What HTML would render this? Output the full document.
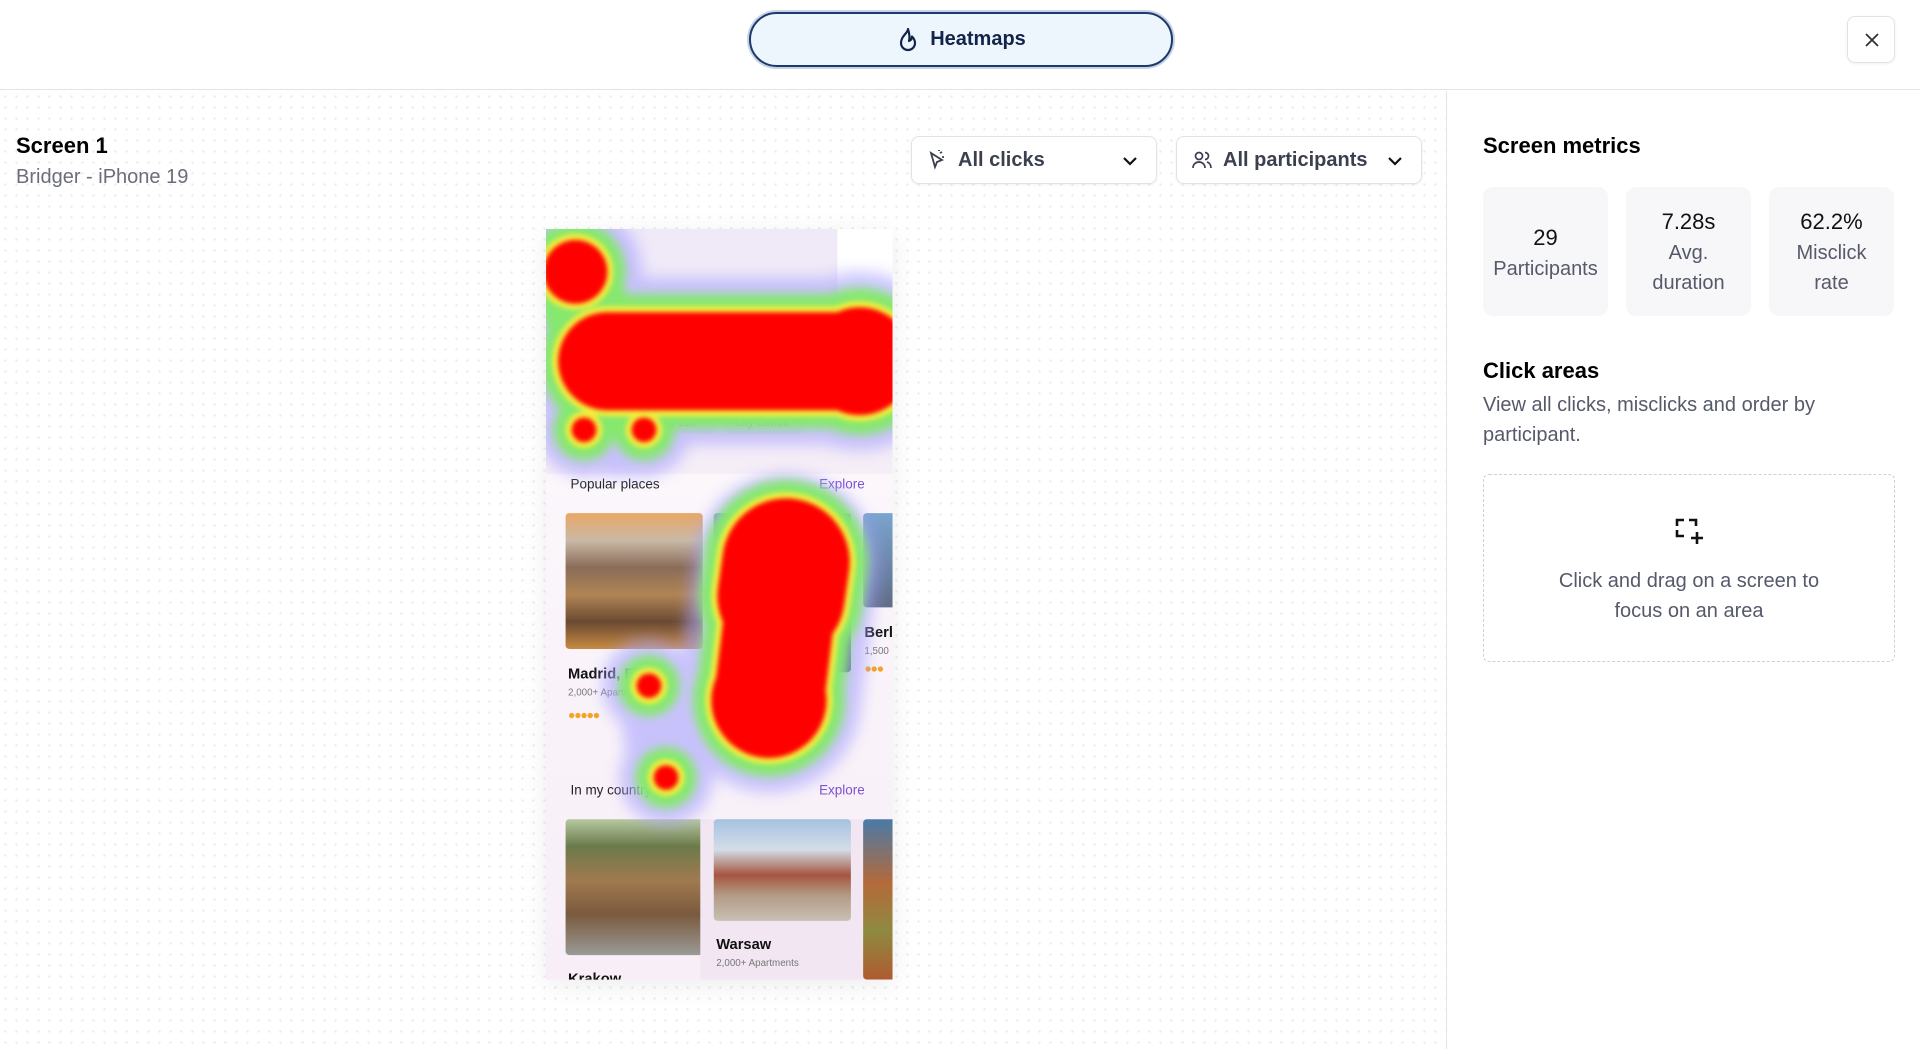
<!DOCTYPE html>
<html><head><meta charset="utf-8"><style>
*{box-sizing:border-box;margin:0;padding:0}
body{width:1920px;height:1049px;overflow:hidden;background:#fff;font-family:"Liberation Sans",sans-serif;position:relative;color:#111}
.hdr{position:absolute;left:0;top:0;width:1920px;height:90px;border-bottom:1px solid #e4e4e7;background:#fff}
.hm{position:absolute;left:749px;top:12px;width:424px;height:55px;border-radius:28px;background:#eef6fd;border:2px solid #1d3a6e;box-shadow:0 0 0 2px #c9d3e4;display:flex;align-items:center;justify-content:center;font-weight:bold;font-size:20px;color:#13244a;gap:10px}
.cls{position:absolute;left:1847px;top:16px;width:48px;height:47px;border:1px solid #e2e2e6;border-radius:8px;box-shadow:0 1px 3px rgba(0,0,0,.06)}
.main{position:absolute;left:0;top:91px;width:1446px;height:958px;background-color:#fff;background-image:radial-gradient(circle,#ececef 1.1px,transparent 1.4px);background-size:11px 11px}
.vline{position:absolute;left:1446px;top:91px;width:1px;height:958px;background:#e4e4e7}
.dd{position:absolute;top:136px;height:48px;border:1px solid #e2e2e6;border-radius:8px;background:#fff;box-shadow:0 1px 3px rgba(0,0,0,.05);font-weight:bold;font-size:20px;color:#3b3f4e;display:flex;align-items:center;padding-left:14px}
.dd .chev{position:absolute;right:16px;top:14px}
.card{position:absolute;top:187px;width:125px;height:129px;background:#f7f7f9;border-radius:10px;text-align:center;font-size:20px;color:#55596a;line-height:30px}
.card b{font-weight:normal;color:#111;font-size:22px}
.phone{position:absolute;left:546px;top:229px;width:283px;height:613px;transform:scale(1.2245);transform-origin:0 0;overflow:hidden;background:#fbf6fb;box-shadow:0 4px 20px rgba(0,0,0,.08);font-family:"Liberation Sans",sans-serif}
.ph{position:absolute}
</style></head><body>
<div class="hdr">
 <div class="hm"><svg width="24" height="26" viewBox="0 0 24 26" fill="none" stroke="#13244a" stroke-width="2.2" stroke-linejoin="round"><path d="M12 2c0 4-7 7-7 14a7 7 0 0 0 14 0c0-3-1.5-5-3-6.5 0 2.5-1.5 4-3 4.5 1-3 .5-7-1-12z"/></svg>Heatmaps</div>
 <div class="cls"><svg width="48" height="47" viewBox="0 0 48 47"><path d="M18 17l12 12M30 17L18 29" stroke="#333" stroke-width="1.8"/></svg></div>
</div>
<div class="main"></div>
<div class="vline"></div>
<div style="position:absolute;left:16px;top:133px;font-size:22px;font-weight:bold;color:#000">Screen 1</div>
<div style="position:absolute;left:16px;top:166px;font-size:20px;color:#6b6e7a">Bridger - iPhone 19</div>

<div class="dd" style="left:911px;width:246px"><svg width="22" height="22" viewBox="0 0 22 22" fill="none" stroke="#3b3f4e" stroke-width="1.8"><path d="M5 4l4 14 2-5 5-2z"/><path d="M14 4l2-1M16 8h2M13 2v-1"/></svg><span style="margin-left:10px">All clicks</span><svg class="chev" width="20" height="20" viewBox="0 0 20 20"><path d="M4 7l6 6 6-6" stroke="#111" stroke-width="2.2" fill="none"/></svg></div>
<div class="dd" style="left:1176px;width:246px"><svg width="22" height="22" viewBox="0 0 22 22" fill="none" stroke="#3b3f4e" stroke-width="1.7"><circle cx="8" cy="7" r="3.5"/><path d="M2 19c0-4 3-6 6-6s6 2 6 6"/><path d="M14 3.5a3.5 3.5 0 0 1 0 7M16 13c2 .5 4 2.5 4 6"/></svg><span style="margin-left:10px">All participants</span><svg class="chev" width="20" height="20" viewBox="0 0 20 20"><path d="M4 7l6 6 6-6" stroke="#111" stroke-width="2.2" fill="none"/></svg></div>

<div class="phone">
 <div class="ph" style="left:0;top:0;width:283px;height:215px;background:linear-gradient(180deg,#efe9f8,#f6eef6)"></div>
 <div class="ph" style="left:238px;top:0;width:45px;height:62px;background:#fff"></div>
 <div class="ph" style="left:44px;top:150px;width:96px;height:17px;background:#ebe3f3;border-radius:4px;font-size:9px;color:#7b5ad0;padding:3px 0 0 46px">to £ 100</div>
 <div class="ph" style="left:147px;top:150px;width:64px;height:17px;background:#ebe3f3;border-radius:4px;font-size:9px;color:#7b5ad0;padding:3px 0 0 7px">City Centre</div>
 <div class="ph" style="left:0;top:200px;width:283px;height:413px;background:linear-gradient(180deg,#fbf7fb,#f7eef7)"></div>
 <div class="ph" style="left:20px;top:203px;font-size:11px;color:#222">Popular places</div>
 <div class="ph" style="left:223px;top:203px;font-size:11px;color:#7c4fd6">Explore</div>
 <div class="ph" style="left:16px;top:232px;width:112px;height:111px;border-radius:3px;background:linear-gradient(180deg,#e9a765 0%,#c9b9a6 20%,#8a6c58 40%,#b08454 60%,#6b4a33 80%,#c78a41 100%)"></div>
 <div class="ph" style="left:137px;top:232px;width:112px;height:130px;border-radius:3px;background:linear-gradient(160deg,#7aa0c0,#3e6a3a 60%,#203050)"></div>
 <div class="ph" style="left:259px;top:232px;width:30px;height:77px;border-radius:3px;background:linear-gradient(180deg,#7aa5cf,#5f6c86)"></div>
 <div class="ph" style="left:260px;top:322px;font-size:12px;font-weight:bold">Berl</div>
 <div class="ph" style="left:260px;top:340px;font-size:8px;color:#777">1,500</div>
 <div class="ph" style="left:18px;top:356px;font-size:12px;font-weight:bold">Madrid, ES</div>
 <div class="ph" style="left:18px;top:374px;font-size:8px;color:#777">2,000+ Apartments</div>
 <div class="ph" style="left:18px;top:392px;font-size:10px;color:#f3a424;letter-spacing:-1px">●●●●●</div>
 <div class="ph" style="left:260px;top:354px;font-size:10px;color:#f3a424;letter-spacing:-1px">●●●</div>
 <div class="ph" style="left:20px;top:453px;font-size:11px;color:#222">In my country</div>
 <div class="ph" style="left:223px;top:453px;font-size:11px;color:#7c4fd6">Explore</div>
 <div class="ph" style="left:16px;top:482px;width:112px;height:111px;border-radius:3px;background:linear-gradient(180deg,#b5c8a0 0%,#6b7a4a 20%,#a07a50 45%,#7a5a3e 70%,#9a9a96 100%)"></div>
 <div class="ph" style="left:126px;top:482px;width:134px;height:131px;background:#f2e6f2"></div>
 <div class="ph" style="left:137px;top:482px;width:112px;height:83px;border-radius:3px;background:linear-gradient(180deg,#a6c2e0 0%,#d3dde7 30%,#a5553f 55%,#b39b85 75%,#c8c0b5 100%)"></div>
 <div class="ph" style="left:259px;top:482px;width:30px;height:131px;border-radius:3px;background:linear-gradient(180deg,#4a7aa8,#b46a3a 40%,#8e8a40 70%,#b05a30)"></div>
 <div class="ph" style="left:139px;top:577px;font-size:12px;font-weight:bold">Warsaw</div>
 <div class="ph" style="left:139px;top:595px;font-size:8px;color:#777">2,000+ Apartments</div>
 <div class="ph" style="left:18px;top:605px;font-size:12px;font-weight:bold">Krakow</div>
 <svg class="ph" style="left:0;top:0" width="283" height="613" viewBox="0 0 283 613" fill="none" stroke-linecap="round" stroke-linejoin="round">
  <defs>
   <filter id="b5" x="-50%" y="-50%" width="200%" height="200%"><feGaussianBlur stdDeviation="6"/></filter>
   <filter id="b3" x="-50%" y="-50%" width="200%" height="200%"><feGaussianBlur stdDeviation="4"/></filter>
   <filter id="b2" x="-50%" y="-50%" width="200%" height="200%"><feGaussianBlur stdDeviation="2"/></filter>
  </defs>
  <g filter="url(#b5)" opacity=".6" stroke="#a9a2ff">
   <path d="M24 35h.1" stroke-width="108"/><path d="M24 40L44 100" stroke-width="96"/><path d="M50 108H250" stroke-width="136"/><path d="M256 108h.1" stroke-width="146"/>
   <path d="M31 164h.1M80 164h.1M84 373h.1M98 448h.1" stroke-width="76"/><path d="M58 164H80" stroke-width="76"/><path d="M196 275L182 385" stroke-width="150"/><path d="M90 390L98 448" stroke-width="60"/>
  </g>
  <g filter="url(#b3)" stroke="#86e86e">
   <path d="M24 35h.1" stroke-width="82"/><path d="M24 40L44 100" stroke-width="70"/><path d="M50 108H250" stroke-width="110"/><path d="M256 108h.1" stroke-width="120"/>
   <path d="M31 164h.1M80 164h.1M84 373h.1M98 448h.1" stroke-width="50"/><path d="M196 272L192 300" stroke-width="134"/><path d="M182 385h.1" stroke-width="124"/><path d="M196 272L182 385" stroke-width="120"/>
  </g>
  <g filter="url(#b2)" stroke="#f2ee3c">
   <path d="M24 35h.1" stroke-width="62"/><path d="M50 108H250" stroke-width="90"/><path d="M256 108h.1" stroke-width="98"/>
   <path d="M31 164h.1M80 164h.1M84 373h.1M98 448h.1" stroke-width="30"/><path d="M196 272L192 300" stroke-width="114"/><path d="M182 385h.1" stroke-width="104"/><path d="M196 272L182 385" stroke-width="100"/>
  </g>
  <g filter="url(#b2)" stroke="#ff0000">
   <path d="M24 35h.1" stroke-width="52"/><path d="M50 108H250" stroke-width="80"/><path d="M256 108h.1" stroke-width="88"/>
   <path d="M31 164h.1M80 164h.1M84 373h.1M98 448h.1" stroke-width="20"/><path d="M196 272L192 300" stroke-width="104"/><path d="M182 385h.1" stroke-width="94"/><path d="M196 272L182 385" stroke-width="90"/>
  </g>
 </svg>
</div>

<div style="position:absolute;left:1483px;top:133px;font-size:22px;font-weight:bold;color:#000">Screen metrics</div>
<div class="card" style="left:1483px;padding-top:36px"><b>29</b><br>Participants</div>
<div class="card" style="left:1626px;padding-top:20px"><b>7.28s</b><br>Avg.<br>duration</div>
<div class="card" style="left:1769px;padding-top:20px"><b>62.2%</b><br>Misclick<br>rate</div>
<div style="position:absolute;left:1483px;top:358px;font-size:22px;font-weight:bold;color:#000">Click areas</div>
<div style="position:absolute;left:1483px;top:390px;width:420px;font-size:20px;color:#55596a;line-height:30px">View all clicks, misclicks and order by participant.</div>
<div style="position:absolute;left:1483px;top:474px;width:412px;height:188px;border:1.5px dashed #cfcfd4;border-radius:6px;text-align:center">
 <svg style="position:absolute;left:189px;top:41px" width="34" height="30" viewBox="0 0 34 30" fill="none" stroke="#111" stroke-width="2.6"><path d="M4 10V4h7M16 4h7v6M4 14v6h7M24 16v12M18 22h12"/></svg>
 <div style="position:absolute;left:0;top:91px;width:100%;font-size:20px;color:#55596a;line-height:30px">Click and drag on a screen to<br>focus on an area</div>
</div>
</body></html>
